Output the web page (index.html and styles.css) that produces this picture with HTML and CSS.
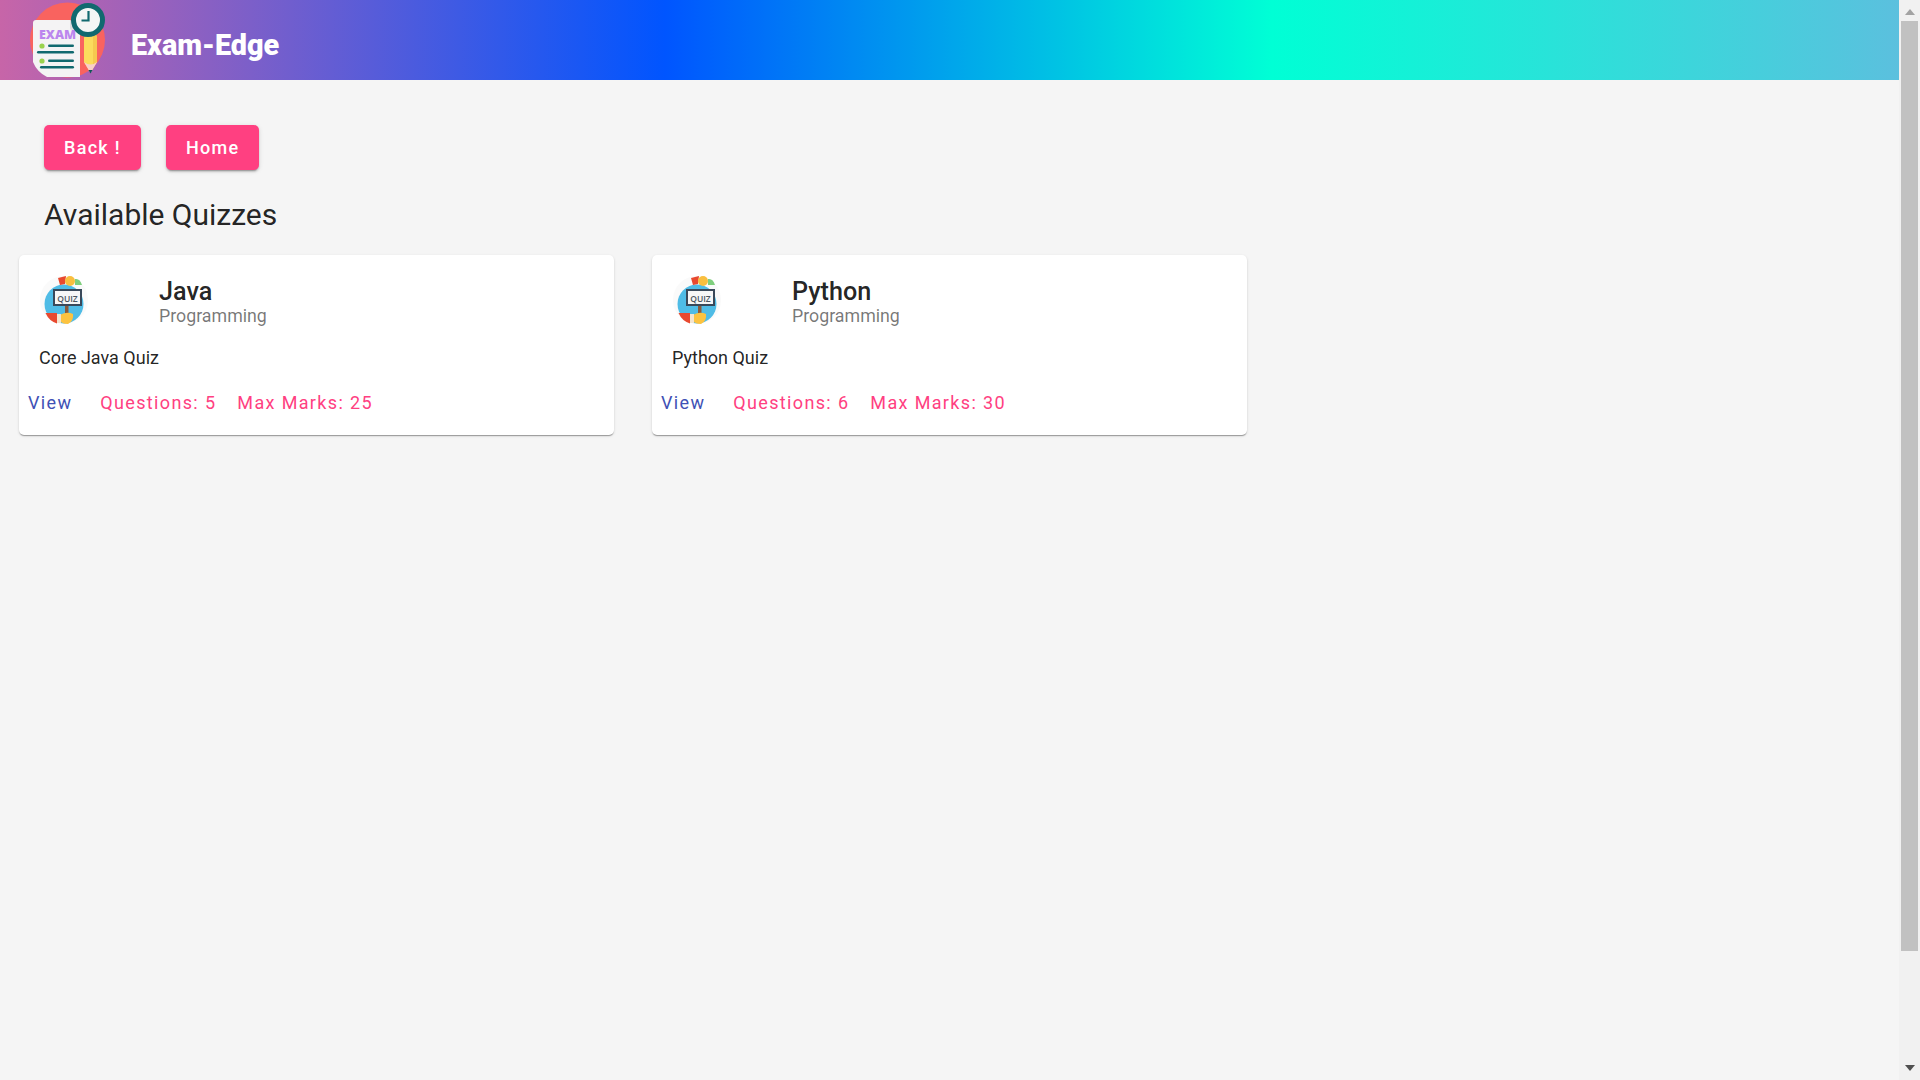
FILE: index.html
```html
<!DOCTYPE html>
<html lang="en">
<head>
<meta charset="utf-8">
<title>Exam-Edge</title>
<link rel="stylesheet" href="styles.css">
</head>
<body>
<div class="app">
  <header class="toolbar">
    <svg class="logo" viewBox="0 0 80 80" width="80" height="80">
      <circle cx="39.5" cy="40" r="37.5" fill="#f9635f"/>
      <path d="M5 23 Q5 20 8 20 H42 L52 30 V77 H19 Q9 72 5 62 Z" fill="#f4f3f4"/>
      <path d="M42 20 L52 30 H44 Q42 30 42 28 Z" fill="#dfdde0"/>
      <text x="11" y="39" class="logo-text">EXAM</text>
      <circle cx="14" cy="46" r="2.6" fill="#9ad24e"/>
      <rect x="20" y="44.5" width="26" height="2.6" rx="1.3" fill="#11696f"/>
      <rect x="9" y="51" width="37" height="2.6" rx="1.3" fill="#11696f"/>
      <circle cx="14" cy="61" r="2.6" fill="#9ad24e"/>
      <rect x="20" y="59.5" width="26" height="2.6" rx="1.3" fill="#11696f"/>
      <rect x="12" y="66" width="34" height="2.6" rx="1.3" fill="#11696f"/>
      <path d="M56 38 Q56 33 62.5 33 Q69 33 69 38 V62 L62.5 73 L56 62 Z" fill="#fbdc5d"/>
      <path d="M65 33.500 Q69 34 69 38 V62 L65 65 Z" fill="#f6c94f"/>
      <path d="M56 62 Q62.5 67 69 62 L62.5 73 Z" fill="#f9cfc9"/>
      <path d="M60.5 70 H64.500 L62.500 73.500 Z" fill="#11535a"/>
      <circle cx="60" cy="20" r="14.500" fill="#f4f6f5" stroke="#11696f" stroke-width="5"/>
      <path d="M60.500 11 V20.500 H53.500" fill="none" stroke="#11696f" stroke-width="2.200"/>
    </svg>
    <span class="brand">Exam-Edge</span>
  </header>
  <main class="content">
    <div class="actions">
      <a class="btn">Back !</a>
      <a class="btn">Home</a>
    </div>
    <h1 class="page-title">Available Quizzes</h1>
    <div class="cards">
      <article class="card">
        <div class="card-head">
          <svg class="avatar" viewBox="0 0 50 50" width="50" height="50">
            <circle cx="24" cy="25" r="24" fill="#fafafa"/>
            <circle cx="24" cy="29" r="19.500" fill="#4fbce6"/>
            <path d="M5.500 38 H17 V48.500 Q9 46 5.500 38 Z" fill="#e8492f"/>
            <path d="M18 3 L26 1 L25 9 L20 10 Z" fill="#e8492f"/>
            <circle cx="30" cy="6" r="5" fill="#f9bf3f"/>
            <path d="M35 4 Q40 3 42 10 L35 10 Z" fill="#7fcf7d"/>
            <rect x="25" y="30" width="3.500" height="12" fill="#8a5a3c"/>
            <rect x="13" y="14" width="29" height="17" fill="#39495a"/>
            <rect x="15" y="16" width="25" height="13" fill="#f7f7f7"/>
            <text x="27.500" y="26.500" class="quiz-text">QUIZ</text>
            <path d="M20 40 Q27 36 33 39 Q34 46 28 49 Q21 49 20 45 Z" fill="#fcc340"/>
            <rect x="17" y="39" width="4" height="9" fill="#f4e5cf"/>
          </svg>
          <div class="titles">
            <h2 class="card-title">Java</h2>
            <div class="card-sub">Programming</div>
          </div>
        </div>
        <p class="card-desc">Core Java Quiz</p>
        <div class="card-foot">
          <a class="link view">View</a>
          <a class="link accent q">Questions: 5</a>
          <a class="link accent">Max Marks: 25</a>
        </div>
      </article>
      <article class="card">
        <div class="card-head">
          <svg class="avatar" viewBox="0 0 50 50" width="50" height="50">
            <circle cx="24" cy="25" r="24" fill="#fafafa"/>
            <circle cx="24" cy="29" r="19.500" fill="#4fbce6"/>
            <path d="M5.500 38 H17 V48.500 Q9 46 5.500 38 Z" fill="#e8492f"/>
            <path d="M18 3 L26 1 L25 9 L20 10 Z" fill="#e8492f"/>
            <circle cx="30" cy="6" r="5" fill="#f9bf3f"/>
            <path d="M35 4 Q40 3 42 10 L35 10 Z" fill="#7fcf7d"/>
            <rect x="25" y="30" width="3.500" height="12" fill="#8a5a3c"/>
            <rect x="13" y="14" width="29" height="17" fill="#39495a"/>
            <rect x="15" y="16" width="25" height="13" fill="#f7f7f7"/>
            <text x="27.500" y="26.500" class="quiz-text">QUIZ</text>
            <path d="M20 40 Q27 36 33 39 Q34 46 28 49 Q21 49 20 45 Z" fill="#fcc340"/>
            <rect x="17" y="39" width="4" height="9" fill="#f4e5cf"/>
          </svg>
          <div class="titles">
            <h2 class="card-title">Python</h2>
            <div class="card-sub">Programming</div>
          </div>
        </div>
        <p class="card-desc">Python Quiz</p>
        <div class="card-foot">
          <a class="link view">View</a>
          <a class="link accent q">Questions: 6</a>
          <a class="link accent">Max Marks: 30</a>
        </div>
      </article>
    </div>
  </main>
</div>
<aside class="scrollbar">
  <svg class="arrow" viewBox="0 0 10 6" width="10" height="6"><path d="M5 0 L10 6 H0 Z" fill="#a3a3a3"/></svg>
  <div class="thumb"></div>
  <svg class="arrow arrow-down" viewBox="0 0 10 6" width="10" height="6"><path d="M0 0 H10 L5 6 Z" fill="#505050"/></svg>
</aside>
</body>
</html>
```
FILE: styles.css
```css
* { box-sizing: border-box; }
html, body { height: 100%; }
body {
  margin: 0;
  height: 1080px;
  overflow: hidden;
  display: flex;
  background: #f5f5f5;
  font-family: Roboto, "Liberation Sans", sans-serif;
  color: rgba(0, 0, 0, 0.87);
}
.app { flex: 1; min-width: 0; display: flex; flex-direction: column; }
.toolbar {
  height: 80px;
  flex: none;
  display: flex;
  align-items: center;
  padding-left: 28px;
  background: linear-gradient(to right, #c765a8 0%, #0055ff 35%, #00ffd5 67%, #5bc0de 100%);
}
.logo { flex: none; }
.logo-text { font: 800 12.500px "Open Sans", sans-serif; fill: #bb86ee; }
.brand {
  margin-left: 23px;
  margin-top: 10px;
  font: 900 28.800px Roboto, sans-serif;
  color: #fff;
}
.content { padding: 45px 0 0 19px; }
.actions { display: flex; gap: 25px; padding-left: 25px; }
.btn {
  height: 45px;
  padding: 0 20px;
  display: flex;
  align-items: center;
  border-radius: 5px;
  background: #ff4081;
  color: #fff;
  font-size: 18px;
  font-weight: 500;
  letter-spacing: 1.300px;
  box-shadow: 0 3px 1px -2px rgba(0,0,0,.2), 0 2px 2px 0 rgba(0,0,0,.14), 0 1px 5px 0 rgba(0,0,0,.12);
}
.page-title {
  margin: 25px 0 0 25px;
  height: 40px;
  line-height: 40px;
  font-size: 30px;
  font-weight: 400;
}
.cards { display: flex; gap: 38px; margin-top: 20px; }
.card {
  width: 595px;
  height: 180px;
  border-radius: 5px;
  background: #fff;
  box-shadow: 0 2px 1px -1px rgba(0,0,0,.2), 0 1px 1px 0 rgba(0,0,0,.14), 0 1px 3px 0 rgba(0,0,0,.12);
}
.card-head { display: flex; padding: 20px 0 0 21px; height: 72px; }
.avatar { flex: none; }
.quiz-text { font: 600 8.500px "Open Sans", sans-serif; fill: #4a5560; text-anchor: middle; }
.titles { margin-left: 69px; }
.card-title { margin: 0; font-size: 25.200px; font-weight: 500; line-height: 28px; margin-top: 3px;}
.card-sub { font-size: 17.800px; line-height: 20px; color: rgba(0,0,0,.54); }
.card-desc { margin: 18px 0 0 20px; font-size: 18px; line-height: 25px; }
.card-foot { display: flex; align-items: center; margin-top: 20px; padding-left: 9px; }
.link { font-size: 18px; font-weight: 400; letter-spacing: 1.350px; line-height: 25px; }
.view { color: #3f51b5; }
.accent { color: #ff4081; }
.q { margin-left: 28px; margin-right: 21px; }
.scrollbar {
  flex: none;
  width: 21px;
  height: 1080px;
  background: #f1f1f1;
  display: flex;
  flex-direction: column;
  align-items: center;
  padding-top: 9px;
}
.arrow { flex: none; }
.thumb { flex: none; width: 17px; height: 930px; margin-top: 6px; background: #c1c1c1; }
.arrow-down { margin-top: 114px; }
```
